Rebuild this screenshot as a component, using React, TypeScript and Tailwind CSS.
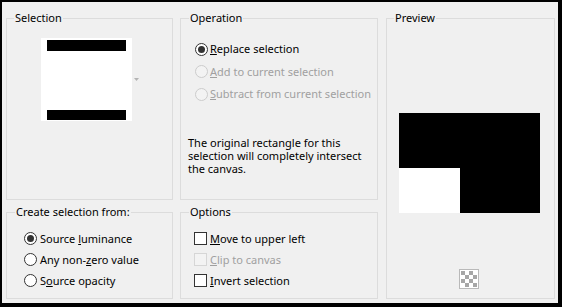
import React from "react";

function Group({
  title,
  className,
  legendClass,
  children,
}: {
  title: string;
  className: string;
  legendClass: string;
  children?: React.ReactNode;
}) {
  return (
    <fieldset className={`border border-[#dcdcdc] min-w-0 ${className}`}>
      <legend className={`px-[1px] leading-[16px] ${legendClass}`}>{title}</legend>
      {children}
    </fieldset>
  );
}

function Radio({ checked, disabled }: { checked?: boolean; disabled?: boolean }) {
  return (
    <span
      className={`w-[13px] h-[13px] rounded-full border flex items-center justify-center shrink-0 ${
        disabled ? "border-[#cccccc] bg-[#f3f3f3]" : "border-[#333333] bg-white"
      }`}
    >
      {checked && <span className="w-[7px] h-[7px] rounded-full bg-[#333333]" />}
    </span>
  );
}

function Check({ disabled }: { disabled?: boolean }) {
  return (
    <span
      className={`w-[13px] h-[13px] border shrink-0 ${
        disabled ? "border-[#d6d6d6] bg-[#f3f3f3]" : "border-[#333333] bg-white"
      }`}
    />
  );
}

export default function App() {
  return (
    <div className="w-[562px] h-[307px] bg-[#f0f0f0] border-black border-t-2 border-l-2 border-r-[4px] border-b-[4px] pl-[4px] pt-[8px] flex font-['Noto_Sans',sans-serif] text-[11px] leading-[16px] text-black">
      <div className="grid grid-cols-[167px_198px] grid-rows-[190px_95px] gap-x-[7px] gap-y-[4px]">
        <Group title="Selection" className="w-[167px] h-[190px]" legendClass="ml-[7px]">
          <div className="flex items-center ml-[34px] mt-[12px]">
            <div className="w-[91px] h-[83px] bg-white flex flex-col justify-between items-center pt-[2px] pb-[1px]">
              <div className="w-[79px] h-[11px] bg-black" />
              <div className="w-[79px] h-[10px] bg-black" />
            </div>
            <svg width="5" height="3" viewBox="0 0 5 3" className="ml-[2px]">
              <polygon points="0,0 5,0 2.5,3" fill="#b4b4b4" />
            </svg>
          </div>
        </Group>

        <Group title="Operation" className="w-[198px] h-[190px]" legendClass="ml-[8px]">
          <div className="ml-[14px] mt-[12px] flex flex-col">
            <div className="h-[22.5px] flex items-center gap-[2px]">
              <Radio checked />
              <span>
                <u className="underline-offset-1">R</u>eplace selection
              </span>
            </div>
            <div className="h-[22.5px] flex items-center gap-[2px] text-[#a0a0a0]">
              <Radio disabled />
              <span>
                <u className="underline-offset-1">A</u>dd to current selection
              </span>
            </div>
            <div className="h-[22.5px] flex items-center gap-[2px] text-[#a0a0a0]">
              <Radio disabled />
              <span>
                <u className="underline-offset-1">S</u>ubtract from current selection
              </span>
            </div>
          </div>
          <p className="ml-[7px] mt-[30px] leading-[13px]">
            The original rectangle for this
            <br />
            selection will completely intersect
            <br />
            the canvas.
          </p>
        </Group>

        <Group title="Create selection from:" className="w-[167px] h-[95px]" legendClass="ml-[8px]">
          <div className="ml-[17px] mt-[8px] flex flex-col">
            <div className="h-[21px] flex items-center gap-[3px]">
              <Radio checked />
              <span>
                Source <u className="underline-offset-1">l</u>uminance
              </span>
            </div>
            <div className="h-[21px] flex items-center gap-[3px]">
              <Radio />
              <span>
                Any non-<u className="underline-offset-1">z</u>ero value
              </span>
            </div>
            <div className="h-[21px] flex items-center gap-[3px]">
              <Radio />
              <span>
                S<u className="underline-offset-1">o</u>urce opacity
              </span>
            </div>
          </div>
        </Group>

        <Group title="Options" className="w-[198px] h-[95px]" legendClass="ml-[8px]">
          <div className="ml-[13px] mt-[8px] flex flex-col">
            <div className="h-[21px] flex items-center gap-[3px]">
              <Check />
              <span>
                <u className="underline-offset-1">M</u>ove to upper left
              </span>
            </div>
            <div className="h-[21px] flex items-center gap-[3px] text-[#a0a0a0]">
              <Check disabled />
              <span>
                <u className="underline-offset-1">C</u>lip to canvas
              </span>
            </div>
            <div className="h-[21px] flex items-center gap-[3px]">
              <Check />
              <span>
                <u className="underline-offset-1">I</u>nvert selection
              </span>
            </div>
          </div>
        </Group>
      </div>

      <Group title="Preview" className="ml-[8px] w-[169px] h-[289px]" legendClass="ml-[7px]">
        <div className="ml-[12px] mt-[87px] w-[141px] h-[100px] bg-black flex items-end">
          <div className="w-[61px] h-[45px] bg-white" />
        </div>
        <div className="ml-[72px] mt-[56px] w-[20px] h-[20px] border border-[#b9b9b9] bg-white p-[1px]">
          <svg width="16" height="16" viewBox="0 0 16 16" className="block">
            <rect x="0" y="0" width="4" height="4" fill="#a6a6a6" />
            <rect x="8" y="0" width="4" height="4" fill="#a6a6a6" />
            <rect x="4" y="4" width="4" height="4" fill="#a6a6a6" />
            <rect x="12" y="4" width="4" height="4" fill="#a6a6a6" />
            <rect x="0" y="8" width="4" height="4" fill="#a6a6a6" />
            <rect x="8" y="8" width="4" height="4" fill="#a6a6a6" />
            <rect x="4" y="12" width="4" height="4" fill="#a6a6a6" />
            <rect x="12" y="12" width="4" height="4" fill="#a6a6a6" />
          </svg>
        </div>
      </Group>
    </div>
  );
}
